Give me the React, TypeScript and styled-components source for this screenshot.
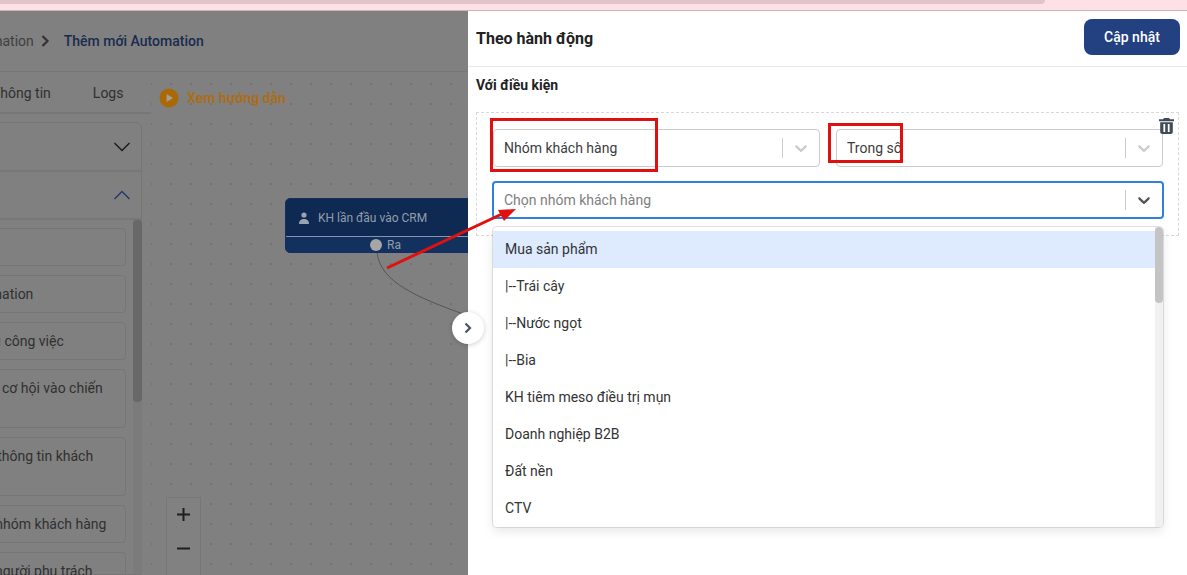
import styled, { createGlobalStyle } from "styled-components";

const GlobalStyle = createGlobalStyle`
  * { box-sizing: border-box; }
  html, body { margin: 0; padding: 0; height: 100%; overflow: hidden; background: #fff; }
  body { font-family: Roboto, "Liberation Sans", sans-serif; font-size: 14px; }
`;

const actionCards = [
  { label: "Gửi" },
  { label: "Tới Automation" },
  { label: "Thêm mới công việc" },
  { label: "Di chuyển cơ hội vào chiến dịch" },
  { label: "Cập nhật thông tin khách hàng" },
  { label: "Xóa khỏi nhóm khách hàng" },
  { label: "Thay đổi người phụ trách" },
];

const options = [
  "Mua sản phẩm",
  "|--Trái cây",
  "|--Nước ngọt",
  "|--Bia",
  "KH tiêm meso điều trị mụn",
  "Doanh nghiệp B2B",
  "Đất nền",
  "CTV",
];

const SelectChevron = ({ color }: { color: string }) => (
  <svg width="20" height="20" viewBox="0 0 20 20" fill={color}>
    <path d="M4.516 7.548c0.436-0.446 1.043-0.481 1.576 0l3.908 3.747 3.908-3.747c0.533-0.481 1.141-0.446 1.576 0 0.436 0.445 0.408 1.197 0 1.615-0.406 0.418-4.695 4.502-4.695 4.502-0.217 0.223-0.502 0.335-0.789 0.335s-0.572-0.112-0.789-0.335c0 0-4.287-4.084-4.695-4.502s-0.436-1.17 0-1.615z" />
  </svg>
);

const AccordionChevron = ({ color, up }: { color: string; up?: boolean }) => (
  <svg width="18" height="12" viewBox="0 0 18 12" fill="none" stroke={color} strokeWidth="1.4">
    <path d={up ? "M1.5 10 9 2.5 16.5 10" : "M1.5 2 9 9.5 16.5 2"} />
  </svg>
);

const SelectBox = ({ text, muted, focused }: { text: string; muted?: boolean; focused?: boolean }) => (
  <Control $focused={focused}>
    <ControlValue $muted={muted}>{text}</ControlValue>
    <ControlDivider />
    <ControlIndicator>
      <SelectChevron color={focused ? "#555" : "#ccc"} />
    </ControlIndicator>
  </Control>
);

export default function App() {
  return (
    <>
      <GlobalStyle />
      <Page>
        <TopStrip>
          <TopBar />
        </TopStrip>
        <Main>
          <Dimmed>
            <Breadcrumb>
              <Crumb>Automation</Crumb>
              <svg width="9" height="12" viewBox="0 0 9 12" fill="none" stroke="#333" strokeWidth="2.2">
                <path d="M1.5 1 6.5 6 1.5 11" />
              </svg>
              <CurrentCrumb>Thêm mới Automation</CurrentCrumb>
            </Breadcrumb>
            <Workspace>
              <Sidebar>
                <Tabs>
                  <Tab>Thông tin</Tab>
                  <Tab>Logs</Tab>
                </Tabs>
                <Panel>
                  <AccordionHead $height={49}>
                    <AccordionChevron color="#1a1a1a" />
                  </AccordionHead>
                  <AccordionHead $height={48}>
                    <AccordionChevron color="#1f3a6e" up />
                  </AccordionHead>
                  <CardArea>
                    <CardList>
                      {actionCards.map((card) => (
                        <ActionCard key={card.label}>{card.label}</ActionCard>
                      ))}
                    </CardList>
                    <SideTrack>
                      <SideThumb />
                    </SideTrack>
                  </CardArea>
                </Panel>
              </Sidebar>
              <Canvas>
                <GuideLink>
                  <svg width="20" height="20" viewBox="0 0 20 20">
                    <circle cx="10" cy="10" r="9.5" fill="#ab6806" />
                    <path d="M7.6 6 14 10 7.6 14z" fill="#a79f92" />
                  </svg>
                  <GuideText>Xem hướng dẫn</GuideText>
                </GuideLink>
                <Connector width="120" height="90" viewBox="0 0 120 90" fill="none">
                  <path d="M1 10C4 40 40 55 90 73" stroke="#555" strokeWidth="1" />
                </Connector>
                <FlowNode>
                  <NodeTitle>
                    <svg width="12" height="12" viewBox="0 0 12 12" fill="#9aa3b2">
                      <circle cx="6" cy="3" r="2.6" />
                      <path d="M1 12c0-3.6 2-5 5-5s5 1.4 5 5z" />
                    </svg>
                    <span>KH lần đầu vào CRM</span>
                  </NodeTitle>
                  <NodeOutput>
                    <NodeHandle />
                    <span>Ra</span>
                  </NodeOutput>
                </FlowNode>
                <ZoomControl>
                  <ZoomButton>
                    <svg width="13" height="13" viewBox="0 0 13 13" stroke="#1e1e1e" strokeWidth="2">
                      <path d="M0 6.5h13M6.5 0v13" />
                    </svg>
                  </ZoomButton>
                  <ZoomButton>
                    <svg width="13" height="13" viewBox="0 0 13 13" stroke="#1e1e1e" strokeWidth="2">
                      <path d="M0 6.5h13" />
                    </svg>
                  </ZoomButton>
                </ZoomControl>
              </Canvas>
            </Workspace>
          </Dimmed>
          <Drawer>
            <CollapseButton>
              <svg width="10" height="12" viewBox="0 0 10 12" fill="none" stroke="#4b5563" strokeWidth="2.2">
                <path d="M2.5 1.5 7 6 2.5 10.5" />
              </svg>
            </CollapseButton>
            <DrawerHeader>
              <DrawerTitle>Theo hành động</DrawerTitle>
              <SaveButton>Cập nhật</SaveButton>
            </DrawerHeader>
            <SectionLabel>Với điều kiện</SectionLabel>
            <ConditionBox>
              <TrashIcon width="15" height="16" viewBox="0 0 15 16">
                <path d="M5 0h5l1 1.2h4v2H0v-2h4z" fill="#414a57" />
                <path d="M1.2 4.2h12.6V14a2 2 0 0 1-2 2H3.2a2 2 0 0 1-2-2z" fill="#414a57" />
                <rect x="4.4" y="6" width="1.8" height="8" fill="#fff" />
                <rect x="8.8" y="6" width="1.8" height="8" fill="#fff" />
              </TrashIcon>
              <SelectRow>
                <SelectBox text="Nhóm khách hàng" />
                <SelectBox text="Trong số" />
              </SelectRow>
              <FocusedField>
                <SelectBox text="Chọn nhóm khách hàng" muted focused />
                <Menu>
                  <OptionList>
                    {options.map((option, index) => (
                      <Option key={option} $active={index === 0}>
                        {option}
                      </Option>
                    ))}
                  </OptionList>
                  <MenuTrack>
                    <MenuThumb />
                  </MenuTrack>
                </Menu>
              </FocusedField>
            </ConditionBox>
          </Drawer>
        </Main>
        <Annotations width="1187" height="575" viewBox="0 0 1187 575" fill="none">
          <rect x="491.5" y="119.5" width="165" height="51" stroke="#e01010" strokeWidth="3" />
          <rect x="829.5" y="124.5" width="72" height="37" stroke="#e01010" strokeWidth="3" />
          <path d="M387 268 504 213" stroke="#e01010" strokeWidth="3" />
          <path d="M516 209 498 210 504 221z" fill="#e01010" />
        </Annotations>
      </Page>
    </>
  );
}

const Page = styled.div`
  position: relative;
  width: 1187px;
  height: 575px;
  overflow: hidden;
  display: flex;
  flex-direction: column;
`;

const TopStrip = styled.div`
  height: 11px;
  flex: none;
  background: #fde1e6;
  border-bottom: 1px solid #c9b4b9;
`;

const TopBar = styled.div`
  width: 1045px;
  height: 4px;
  background: #e0c4c9;
  border-bottom-right-radius: 6px;
`;

const Main = styled.div`
  flex: 1;
  display: flex;
  min-height: 0;
`;

const Dimmed = styled.div`
  width: 568px;
  margin-left: -100px;
  flex: none;
  display: flex;
  flex-direction: column;
  background: #808080;
  overflow: hidden;
`;

const Breadcrumb = styled.div`
  height: 61px;
  flex: none;
  display: flex;
  align-items: center;
  padding-left: 61px;
  border-bottom: 1px solid #767676;
`;

const Crumb = styled.span`
  color: #3f3f3f;
  margin-right: 7px;
`;

const CurrentCrumb = styled.span`
  color: #182c4e;
  font-weight: 500;
  margin-left: 14px;
`;

const Workspace = styled.div`
  flex: 1;
  display: flex;
  min-height: 0;
`;

const Sidebar = styled.div`
  width: 251px;
  flex: none;
  display: flex;
  flex-direction: column;
  min-height: 0;
`;

const Tabs = styled.div`
  height: 42px;
  flex: none;
  display: flex;
  gap: 42px;
  padding: 12px 0 0 92px;
  color: #303030;
  border-bottom: 2px solid #777;
`;

const Tab = styled.span`
  line-height: 18px;
`;

const Panel = styled.div`
  flex: 1;
  margin: 8px 9px 0 0;
  min-height: 0;
  display: flex;
  flex-direction: column;
  border: 1px solid #767676;
  border-radius: 0 6px 0 0;
`;

const AccordionHead = styled.div<{ $height: number }>`
  height: ${({ $height }) => $height}px;
  flex: none;
  display: flex;
  align-items: center;
  justify-content: flex-end;
  padding-right: 10px;
  border-bottom: 2px solid #777;
`;

const CardArea = styled.div`
  flex: 1;
  min-height: 0;
  display: flex;
`;

const CardList = styled.div`
  flex: 1;
  display: flex;
  flex-direction: column;
  gap: 9px;
  padding: 8px 7px 0 0;
`;

const ActionCard = styled.div`
  flex: none;
  padding: 7.5px 8px 7.5px 36px;
  line-height: 21px;
  color: #303030;
  border: 1px solid #767676;
  border-radius: 4px;
`;

const SideTrack = styled.div`
  width: 9px;
  flex: none;
  margin-right: -1px;
  background: #7b7b7b;
`;

const SideThumb = styled.div`
  height: 182px;
  border-radius: 4px;
  background: #686868;
`;

const Canvas = styled.div`
  position: relative;
  flex: 1;
  padding: 16px 0 0 8px;
  background-color: #808080;
  background-image: radial-gradient(circle, #727272 0.9px, transparent 1.1px);
  background-size: 20px 20px;
  background-position: 10px 42px;
`;

const GuideLink = styled.div`
  display: flex;
  align-items: center;
  gap: 8px;
`;

const GuideText = styled.span`
  color: #ad6c14;
  font-weight: 600;
`;

const Connector = styled.svg`
  position: absolute;
  left: 225px;
  top: 170px;
`;

const FlowNode = styled.div`
  position: absolute;
  left: 134px;
  top: 126px;
  width: 260px;
  height: 55px;
  border-radius: 5px;
  overflow: hidden;
  background: #0e2a52;
  border: 1px solid #172c63;
  color: #949daa;
  font-size: 12px;
`;

const NodeTitle = styled.div`
  height: 38px;
  display: flex;
  align-items: center;
  gap: 8px;
  padding-left: 12px;
  border-bottom: 1px solid #8a93a3;
`;

const NodeOutput = styled.div`
  height: 16px;
  padding-left: 84px;
  display: flex;
  align-items: center;
  gap: 5px;
  background: #12315f;
`;

const NodeHandle = styled.span`
  width: 12px;
  height: 12px;
  border-radius: 50%;
  background: #a6a6a6;
`;

const ZoomControl = styled.div`
  position: absolute;
  left: 15px;
  top: 425px;
  width: 35px;
  height: 100px;
  display: flex;
  flex-direction: column;
  border: 1px solid #777;
  background: #818181;
`;

const ZoomButton = styled.div`
  height: 34px;
  padding-bottom: 2px;
  display: flex;
  align-items: center;
  justify-content: center;
`;

const Drawer = styled.div`
  position: relative;
  flex: 1;
  display: flex;
  flex-direction: column;
  background: #fff;
  color: #333;
`;

const CollapseButton = styled.div`
  position: absolute;
  left: -16px;
  top: 301px;
  width: 32px;
  height: 32px;
  border-radius: 50%;
  display: flex;
  align-items: center;
  justify-content: center;
  background: #fff;
  box-shadow: 0 1px 5px rgba(0, 0, 0, 0.2);
`;

const DrawerHeader = styled.div`
  height: 56px;
  flex: none;
  display: flex;
  align-items: center;
  justify-content: space-between;
  padding: 0 7px 3px 8px;
  border-bottom: 1px solid #e8e8e8;
`;

const DrawerTitle = styled.h2`
  margin: 2px 0 0;
  font-size: 16px;
  font-weight: 700;
  color: #222;
`;

const SaveButton = styled.button`
  width: 96px;
  height: 36px;
  border: 0;
  border-radius: 8px;
  background: #234080;
  color: #fff;
  font: 500 14px Roboto, sans-serif;
`;

const SectionLabel = styled.div`
  margin: 9px 8px 0;
  height: 18px;
  line-height: 18px;
  font-weight: 700;
  color: #222;
`;

const ConditionBox = styled.div`
  position: relative;
  margin: 18px 8px 0;
  height: 124px;
  padding: 16px 15px 0 16px;
  display: flex;
  flex-direction: column;
  gap: 14px;
  border: 1px dashed #d8d8d8;
`;

const TrashIcon = styled.svg`
  position: absolute;
  right: 4px;
  top: 5px;
`;

const SelectRow = styled.div`
  display: grid;
  grid-template-columns: 1fr 1fr;
  gap: 16px;
`;

const FocusedField = styled.div`
  position: relative;
`;

const Control = styled.div<{ $focused?: boolean }>`
  height: 38px;
  display: flex;
  align-items: center;
  padding-left: 10px;
  border-radius: 4px;
  border: ${({ $focused }) => ($focused ? "2px solid #2f80e0" : "1px solid #ccc")};
  margin: ${({ $focused }) => ($focused ? "0 -1px" : "0")};
`;

const ControlValue = styled.span<{ $muted?: boolean }>`
  flex: 1;
  color: ${({ $muted }) => ($muted ? "#808080" : "#3c3c3c")};
`;

const ControlDivider = styled.span`
  width: 1px;
  height: 20px;
  background: #ccc;
`;

const ControlIndicator = styled.span`
  width: 36px;
  display: flex;
  align-items: center;
  justify-content: center;
`;

const Menu = styled.div`
  position: absolute;
  left: 0;
  right: 0;
  top: 46px;
  height: 300px;
  display: flex;
  background: #fff;
  border-radius: 4px;
  overflow: hidden;
  box-shadow: 0 0 0 1px rgba(0, 0, 0, 0.1), 0 4px 11px rgba(0, 0, 0, 0.1);
`;

const OptionList = styled.div`
  flex: 1;
  padding: 4px 0;
`;

const Option = styled.div<{ $active?: boolean }>`
  height: 37px;
  line-height: 37px;
  padding-left: 12px;
  color: #333;
  background: ${({ $active }) => ($active ? "#deebff" : "transparent")};
`;

const MenuTrack = styled.div`
  width: 8px;
  flex: none;
  background: #f1f1f1;
`;

const MenuThumb = styled.div`
  height: 76px;
  border-radius: 4px;
  background: #c4c4c4;
`;

const Annotations = styled.svg`
  position: absolute;
  left: 0;
  top: 0;
  pointer-events: none;
`;
